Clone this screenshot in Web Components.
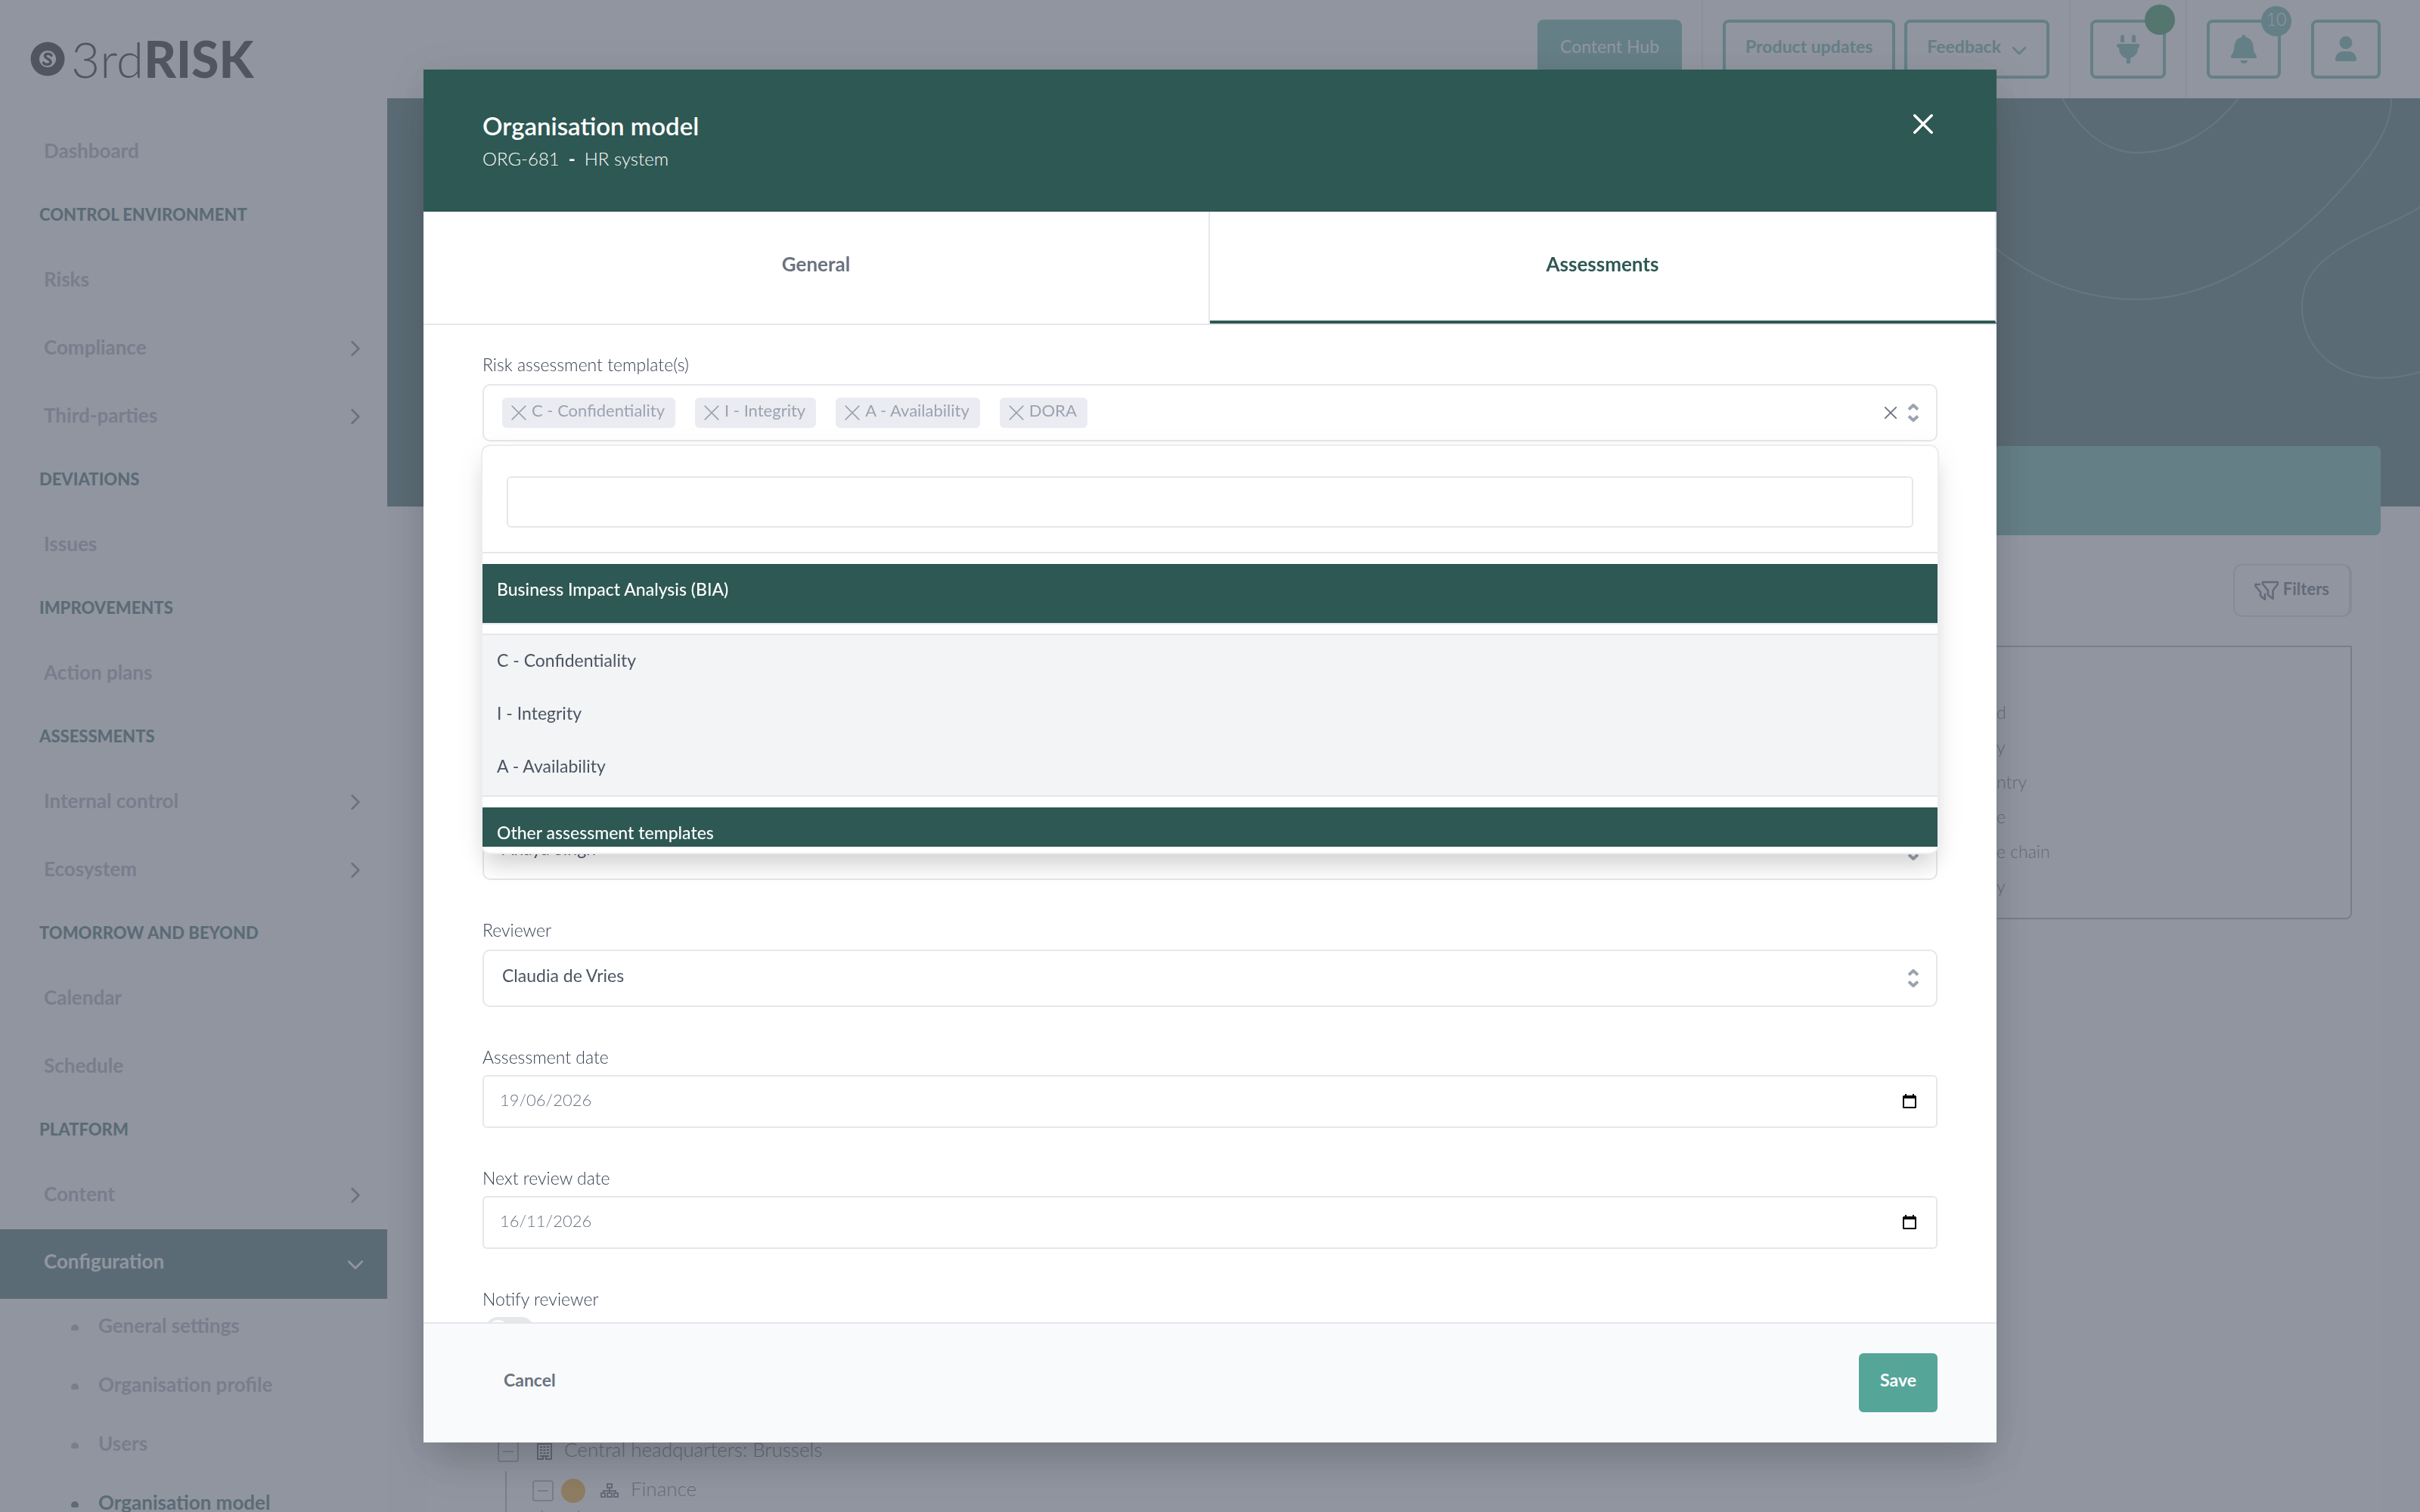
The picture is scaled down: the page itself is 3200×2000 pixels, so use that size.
<!DOCTYPE html>
<html lang="en">
<head>
<meta charset="utf-8">
<meta name="viewport" content="width=device-width, initial-scale=1">
<title>Organisation model</title>
<style>
  :root {
    --primary: #2e5853;
    --accent: #55a698;
    --gray-50: #f9fafc;
    --gray-100: #f3f4f6;
    --gray-200: #e5e7eb;
    --gray-300: #d1d5db;
    --gray-400: #9ca3af;
    --gray-500: #6b7280;
    --gray-600: #4b5563;
    --gray-700: #374151;
    --text-s: 22px;
    --text-m: 23px;
    --text-l: 26px;
    --text-xl: 33px;
  }

  body {
    margin: 0;
    height: 100vh;
    overflow: hidden;
    font-family: Lato, "Liberation Sans", sans-serif;
    font-size: var(--text-m);
    color: var(--gray-500);
    background: var(--gray-50);
  }
</style>
</head>
<body>
<app-shell>
  <app-sidebar slot="sidebar">
    <app-logo></app-logo>
    <nav-item>Dashboard</nav-item>
    <nav-heading>CONTROL ENVIRONMENT</nav-heading>
    <nav-item>Risks</nav-item>
    <nav-item expandable>Compliance</nav-item>
    <nav-item expandable>Third-parties</nav-item>
    <nav-heading>DEVIATIONS</nav-heading>
    <nav-item>Issues</nav-item>
    <nav-heading>IMPROVEMENTS</nav-heading>
    <nav-item>Action plans</nav-item>
    <nav-heading>ASSESSMENTS</nav-heading>
    <nav-item expandable>Internal control</nav-item>
    <nav-item expandable>Ecosystem</nav-item>
    <nav-heading>TOMORROW AND BEYOND</nav-heading>
    <nav-item>Calendar</nav-item>
    <nav-item>Schedule</nav-item>
    <nav-heading>PLATFORM</nav-heading>
    <nav-item expandable>Content</nav-item>
    <nav-item expandable open>Configuration</nav-item>
    <nav-subitem>General settings</nav-subitem>
    <nav-subitem>Organisation profile</nav-subitem>
    <nav-subitem>Users</nav-subitem>
    <nav-subitem current>Organisation model</nav-subitem>
  </app-sidebar>
  <app-header slot="header"></app-header>
  <page-hero slot="hero"></page-hero>
  <page-card>
    <type-legend></type-legend>
    <org-tree></org-tree>
  </page-card>
</app-shell>

<modal-dialog>
  <span slot="title">Organisation model</span>
  <span slot="code">ORG-681</span>
  <span slot="name">HR system</span>
  <modal-tabs slot="tabs"></modal-tabs>
  <multi-select label="Risk assessment template(s)" values="C - Confidentiality|I - Integrity|A - Availability|DORA"></multi-select>
  <select-field class="assessor" name="Assessor" value="Anaya Singh"></select-field>
  <select-field label="Reviewer" value="Claudia de Vries"></select-field>
  <date-field label="Assessment date" value="19/06/2026"></date-field>
  <date-field label="Next review date" value="16/11/2026"></date-field>
  <switch-field label="Notify reviewer"></switch-field>
</modal-dialog>

<script>
  const CARETS = `<svg class="carets" width="14" height="24" viewBox="0 0 14 24" fill="none" stroke="currentColor" stroke-width="4" stroke-linejoin="round" aria-hidden="true"><path d="M1 7.500L7 2l6 5.500M1 16.500L7 22l6-5.500"/></svg>`;
  const CROSS = (size, width) =>
    `<svg width="${size}" height="${size}" viewBox="0 0 20 20" fill="none" stroke="currentColor" stroke-width="${width}" stroke-linecap="round" aria-hidden="true"><path d="M2 2l16 16M18 2L2 18"/></svg>`;

  class BaseElement extends HTMLElement {
    constructor() {
      super();
      this.attachShadow({ mode: 'open' });
    }

    connectedCallback() {
      const template = document.createElement('template');
      template.innerHTML = `
        <style>
          :host { display: block; box-sizing: border-box; }
          *, *::before, *::after { box-sizing: border-box; }
          button, input, select { font: inherit; color: inherit; margin: 0; }
          button { cursor: pointer; background: none; border: 0; padding: 0; }
          a { color: inherit; text-decoration: none; }
          svg { display: block; flex: none; }
        </style>
        ${this.template()}`;
      this.shadowRoot.append(template.content.cloneNode(true));
    }
  }

  class AppShell extends BaseElement {
    template() {
      return `
        <style>
          :host { display: flex; height: 100vh; overflow: hidden; }
          .sidebar { flex: none; width: 16%; background: #fff; }
          .main { flex: 1; min-width: 0; }
          .content { margin-top: -80px; padding: 0 52px; position: relative; }
        </style>
        <div class="sidebar"><slot name="sidebar"></slot></div>
        <div class="main">
          <slot name="header"></slot>
          <slot name="hero"></slot>
          <div class="content"><slot></slot></div>
        </div>`;
    }
  }

  class AppSidebar extends BaseElement {
    template() {
      return `<nav aria-label="Main"><slot></slot></nav>`;
    }
  }

  class AppLogo extends BaseElement {
    template() {
      return `
        <style>
          :host { padding: 38px 40px; color: #000; }
          .logo { display: flex; align-items: center; height: 80px; }
          .name { margin-left: 8px; font-size: 66px; line-height: 80px; font-weight: 300; white-space: nowrap; }
          b { font-weight: 900; }
        </style>
        <div class="logo">
          <svg width="46" height="46" viewBox="0 0 46 46" aria-hidden="true">
            <circle cx="23" cy="23" r="22.500"/>
            <circle cx="23" cy="23" r="11" fill="#fff"/>
            <path d="M28 18.500c-1.500-3-8.500-3.500-8.500.500 0 4 7.500 3.500 7.500 8 0 4-7.500 4.500-9.500 1" fill="none" stroke="#000" stroke-width="3.500" stroke-linecap="round"/>
          </svg>
          <span class="name">3rd<b>RISK</b></span>
        </div>`;
    }
  }

  class NavHeading extends BaseElement {
    template() {
      return `
        <style>
          :host {
            height: 80px;
            padding: 0 52px;
            line-height: 76px;
            font-size: var(--text-s);
            font-weight: 900;
            color: var(--primary);
            white-space: nowrap;
          }
        </style>
        <slot></slot>`;
    }
  }

  /**
   * @attr expandable - shows a chevron
   * @attr open - highlights the row, chevron points down
   */
  class NavItem extends BaseElement {
    template() {
      const open = this.hasAttribute('open');
      const chevron = open ? 'M3 8l8 8 8-8' : 'M7 3l8 8-8 8';
      return `
        <style>
          a {
            display: flex;
            align-items: center;
            justify-content: space-between;
            height: 90px;
            padding: 0 30px 0 58px;
            font-size: var(--text-l);
            font-weight: 700;
            color: var(--gray-400);
          }
          span { padding-bottom: 4px; }
          svg { color: var(--gray-500); }
          :host([open]) a { height: 92px; background: var(--primary); color: #fff; }
          :host([open]) span { padding-bottom: 8px; }
          :host([open]) svg { color: #fff; }
        </style>
        <a href="#">
          <span><slot></slot></span>
          ${this.hasAttribute('expandable') ? `<svg width="24" height="24" viewBox="0 0 22 22" fill="none" stroke="currentColor" stroke-width="2.500" stroke-linecap="round" stroke-linejoin="round" aria-hidden="true"><path d="${chevron}"/></svg>` : ''}
        </a>`;
    }
  }

  class NavSubitem extends BaseElement {
    template() {
      return `
        <style>
          a {
            display: flex;
            align-items: center;
            gap: 26px;
            height: 78px;
            padding: 0 0 8px 94px;
            font-size: var(--text-l);
            font-weight: 700;
            color: var(--gray-400);
            white-space: nowrap;
          }
          a::before {
            content: '';
            width: 10px;
            height: 8px;
            margin-top: 6px;
            border-radius: 5px 5px 2px 2px;
            background: currentColor;
          }
          :host([current]) a { color: var(--primary); }
        </style>
        <a href="#"><slot></slot></a>`;
    }
  }

  class AppHeader extends BaseElement {
    template() {
      return `
        <style>
          header { display: flex; justify-content: flex-end; height: 130px; background: #fff; padding-right: 52px; }
          .group { display: flex; align-items: center; gap: 12px; padding: 0 26px; border-left: 2px solid var(--gray-200); }
          .group:first-child { border: 0; }
          .group:last-child { padding-right: 0; gap: 40px; }
          button {
            position: relative;
            display: flex;
            align-items: center;
            justify-content: center;
            gap: 14px;
            height: 78px;
            padding: 0 26px;
            border: 4px solid var(--accent);
            border-radius: 8px;
            color: var(--accent);
            font-weight: 700;
            white-space: nowrap;
          }
          button span { padding-bottom: 8px; }
          .solid { background: var(--accent); color: #fff; font-weight: 400; }
          .icon { width: 98px; padding: 0; }
          .plug { width: 100px; }
          .user { width: 92px; }
          .badge {
            position: absolute;
            top: -22px;
            right: -18px;
            width: 40px;
            height: 40px;
            padding: 0;
            border-radius: 50%;
            background: var(--accent);
            color: #fff;
            font-weight: 300;
            line-height: 34px;
          }
          .status { top: -24px; right: -16px; background: #15803d; }
        </style>
        <header>
          <div class="group"><button class="solid"><span>Content Hub</span></button></div>
          <div class="group">
            <button><span>Product updates</span></button>
            <button>
              <span>Feedback</span>
              <svg width="20" height="20" viewBox="0 0 20 20" fill="none" stroke="currentColor" stroke-width="2.500" stroke-linecap="round" stroke-linejoin="round" aria-hidden="true"><path d="M2 8l8 8 8-8"/></svg>
            </button>
          </div>
          <div class="group">
            <button class="icon plug" aria-label="Integrations">
              <svg width="30" height="40" viewBox="0 0 30 40" fill="currentColor" aria-hidden="true"><path d="M5 11V3.500a2.500 2.500 0 015 0V11zM20 11V3.500a2.500 2.500 0 015 0V11zM2 13h26a2 2 0 010 5v1c0 6-4 11-10 13v7h-5v-7C7 31 3 25 3 19v-1a2 2 0 01-1-5z"/></svg>
              <i class="badge status"></i>
            </button>
          </div>
          <div class="group">
            <button class="icon" aria-label="Notifications">
              <svg width="36" height="40" viewBox="0 0 36 40" fill="currentColor" aria-hidden="true"><path d="M18 1c1.500 0 2.500 1 2.500 3C27 5.500 30 10 30.500 16c.3 6 1 8 4 12 1.200 2 .5 4-1.500 4H3c-2 0-2.700-2-1.500-4 3-4 3.700-6 4-12C6 10 9 5.500 15.500 4c0-2 1-3 2.500-3zM13.500 35h9.500a4.700 4 0 01-9.500 0z"/></svg>
              <span class="badge">10</span>
            </button>
            <button class="icon user" aria-label="Account">
              <svg width="30" height="36" viewBox="0 0 30 36" fill="currentColor" aria-hidden="true"><circle cx="15" cy="9.500" r="8.500"/><path d="M3 34a2 2 0 01-2-2c0-6 4-11 10-11h8c6 0 10 5 10 11a2 2 0 01-2 2z"/></svg>
            </button>
          </div>
        </header>`;
    }
  }

  class PageHero extends BaseElement {
    template() {
      return `
        <style>
          .hero { display: flex; justify-content: flex-end; height: 540px; background: var(--primary); }
        </style>
        <div class="hero">
          <svg width="560" height="540" viewBox="2640 130 560 540" fill="none" stroke="#fff" stroke-opacity=".25" stroke-width="2" aria-hidden="true">
            <path d="M2727 130C2750 172 2784 202 2826 202C2876 202 2924 176 2960 130"/>
            <path d="M2640 329C2696 374 2760 396 2826 396C2926 396 3010 336 3072 276C3120 226 3164 178 3162 130"/>
            <path d="M3200 274C3164 296 3130 306 3102 324C3064 346 3044 370 3044 404C3044 462 3090 500 3148 500C3168 500 3184 497 3200 492"/>
          </svg>
        </div>`;
    }
  }

  class PageCard extends BaseElement {
    template() {
      return `
        <style>
          :host { background: #fff; border-radius: 8px; min-height: 1500px; }
          .banner { height: 118px; border-radius: 8px; background: var(--accent); }
          .body { padding: 38px; }
          .tools { display: flex; justify-content: flex-end; margin-bottom: 38px; }
          button {
            display: flex;
            align-items: center;
            gap: 6px;
            height: 70px;
            padding: 0 26px;
            border: 2px solid var(--gray-300);
            border-right-width: 4px;
            border-radius: 12px;
            font-size: var(--text-s);
            font-weight: 700;
            color: var(--gray-600);
          }
          button span { padding-bottom: 6px; }
        </style>
        <div class="banner"></div>
        <div class="body">
          <div class="tools">
            <button>
              <svg width="32" height="26" viewBox="0 0 32 26" fill="none" stroke="currentColor" stroke-width="2.500" stroke-linejoin="round" stroke-linecap="round" aria-hidden="true"><path d="M11 2h20v2.500L24.500 13v11L18 19v-6L11 4.500zM7 5H1.500v2.500L8 15v5l6 5v-7"/></svg>
              <span>Filters</span>
            </button>
          </div>
          <slot></slot>
        </div>`;
    }
  }

  class TypeLegend extends BaseElement {
    template() {
      return `
        <style>
          :host { border: 2px solid var(--gray-400); border-radius: 0 0 8px 8px; padding: 63px 0 19px; }
          ul { list-style: none; width: 468px; margin: 0 0 0 auto; padding: 0; font-weight: 300; line-height: 46px; color: var(--gray-600); }
        </style>
        <ul><li>d</li><li>y</li><li>ntry</li><li>e</li><li>e chain</li><li>y</li></ul>`;
    }
  }

  class OrgTree extends BaseElement {
    template() {
      return `
        <style>
          :host { margin-top: 678px; padding-left: 56px; font-size: var(--text-l); font-weight: 300; color: var(--gray-600); }
          .row { display: flex; align-items: center; height: 52px; }
          .row span { padding-bottom: 6px; }
          button { width: 28px; height: 28px; border: 2px solid var(--gray-400); border-radius: 4px; display: grid; place-items: center; }
          button::before { content: ''; width: 14px; height: 2px; background: var(--gray-400); }
          .building { margin: 0 16px 0 24px; }
          .children { margin-left: 10px; padding-left: 34px; border-left: 2px solid var(--gray-400); height: 80px; }
          .dot { width: 32px; height: 32px; margin: 0 20px 0 10px; border-radius: 50%; background: #f59e0b; }
          .unit { margin-right: 16px; }
          .stems { display: flex; gap: 46px; padding-left: 12px; }
          .stems i { width: 2px; height: 20px; background: var(--gray-400); }
        </style>
        <div class="row">
          <button aria-label="Collapse"></button>
          <svg class="building" width="20" height="24" viewBox="0 0 20 24" fill="none" stroke="currentColor" stroke-width="2" aria-hidden="true"><path d="M1 2h18v20h-7v-4H8v4H1z"/><path d="M4 6h12M4 10h12M4 14h12M4 18h3M13 18h3" stroke-dasharray="3 1.500"/></svg>
          <span>Central headquarters: Brussels</span>
        </div>
        <div class="children">
          <div class="row">
            <button aria-label="Collapse"></button>
            <i class="dot"></i>
            <svg class="unit" width="24" height="20" viewBox="0 0 24 20" fill="none" stroke="currentColor" stroke-width="2" aria-hidden="true"><path d="M9 1h6v5H9zM1 13h5v5H1zM9 13h6v5H9zM18 13h5v5h-5zM12 6v7M4 13v-3h16v3"/></svg>
            <span>Finance</span>
          </div>
          <div class="stems"><i></i><i></i></div>
        </div>`;
    }
  }

  class ModalDialog extends BaseElement {
    template() {
      return `
        <style>
          :host {
            position: fixed;
            inset: 0;
            display: flex;
            justify-content: center;
            padding: 92px 0;
            background: rgba(107, 114, 128, .75);
          }
          .dialog {
            display: flex;
            flex-direction: column;
            width: 65%;
            background: #fff;
            box-shadow: 0 40px 50px -10px rgba(0, 0, 0, .12), 0 8px 50px rgba(0, 0, 0, .1);
          }
          header {
            display: flex;
            justify-content: space-between;
            align-items: flex-start;
            height: 188px;
            padding: 54px 78px 0;
            background: var(--primary);
            color: #fff;
          }
          h2 { margin: 0; font-size: var(--text-xl); line-height: 40px; font-weight: 600; }
          p { display: flex; gap: 12px; margin: 6px 0 0; font-size: 24px; line-height: 36px; font-weight: 300; }
          p b { font-weight: 700; }
          .close { width: 38px; height: 36px; display: grid; place-items: center; }
          .body { flex: 1; min-height: 0; overflow: hidden; display: flex; flex-direction: column; gap: 54px; padding: 40px 78px; }
          .body ::slotted(*) { flex: none; }
          .body ::slotted(.assessor) { margin-top: 450px; }
          footer {
            display: flex;
            justify-content: space-between;
            align-items: center;
            height: 159px;
            padding: 0 78px 2px;
            border-top: 2px solid var(--gray-200);
            background: var(--gray-50);
            font-weight: 700;
          }
          footer button { height: 78px; padding: 0 28px 8px; border-radius: 6px; }
          .save { background: var(--accent); color: #fff; }
        </style>
        <div class="dialog" role="dialog" aria-modal="true">
          <header>
            <div>
              <h2><slot name="title"></slot></h2>
              <p><slot name="code"></slot><b>-</b><slot name="name"></slot></p>
            </div>
            <button class="close" aria-label="Close">${CROSS(28, 2.5)}</button>
          </header>
          <slot name="tabs"></slot>
          <div class="body"><slot></slot></div>
          <footer>
            <button>Cancel</button>
            <button class="save">Save</button>
          </footer>
        </div>`;
    }
  }

  class ModalTabs extends BaseElement {
    template() {
      return `
        <style>
          :host { border-bottom: 2px solid var(--gray-200); }
          div { display: flex; }
          button {
            flex: 1;
            height: 148px;
            padding-bottom: 10px;
            border-right: 2px solid var(--gray-200);
            font-size: var(--text-l);
            font-weight: 700;
          }
          [aria-selected="true"] { padding-bottom: 6px; border-bottom: 4px solid var(--primary); color: var(--primary); }
        </style>
        <div role="tablist">
          <button role="tab" aria-selected="false">General</button>
          <button role="tab" aria-selected="true">Assessments</button>
        </div>`;
    }
  }

  const LABEL_STYLE = `
    label, .label { display: block; line-height: 24px; font-weight: 300; color: var(--gray-700); }`;

  /**
   * @attr label - text above the box
   * @attr values - chosen templates, separated by |
   */
  class MultiSelect extends BaseElement {
    template() {
      const chips = this.getAttribute('values').split('|').map((value) => `
        <button class="chip" aria-label="Remove ${value}">${CROSS(22, 1.5)}<span>${value}</span></button>`).join('');
      return `
        <style>
          ${LABEL_STYLE}
          :host { position: relative; z-index: 1; }
          .box {
            display: flex;
            align-items: center;
            gap: 26px;
            height: 76px;
            margin-top: 14px;
            padding: 0 23px 0 24px;
            border: 2px solid var(--gray-200);
            border-radius: 10px;
          }
          .chip {
            display: flex;
            align-items: center;
            gap: 6px;
            height: 40px;
            padding: 0 14px 0 11px;
            border-radius: 6px;
            background: #ebecf2;
            color: var(--gray-400);
            font-size: var(--text-s);
            white-space: nowrap;
          }
          .chip span { padding-bottom: 8px; }
          .tools { display: flex; align-items: center; gap: 14px; margin-left: auto; color: var(--gray-500); }
          .carets { color: var(--gray-400); }
        </style>
        <div class="label" id="label">${this.getAttribute('label')}</div>
        <div class="box" role="group" aria-labelledby="label">
          ${chips}
          <div class="tools">
            <button aria-label="Clear all">${CROSS(18, 2)}</button>
            ${CARETS}
          </div>
        </div>
        <option-menu></option-menu>`;
    }
  }

  class OptionMenu extends BaseElement {
    template() {
      return `
        <style>
          :host {
            position: absolute;
            top: 118px;
            left: -2px;
            right: -2px;
            padding-bottom: 8px;
            border: 2px solid #ededf0;
            border-radius: 12px;
            background: #fff;
            box-shadow: 0 20px 30px -6px rgba(0, 0, 0, .14), 0 8px 40px rgba(0, 0, 0, .06);
          }
          .search { padding: 40px 32px 32px; border-bottom: 2px solid var(--gray-200); }
          input { display: block; width: 100%; height: 68px; padding: 0 24px; border: 2px solid var(--gray-200); border-radius: 6px; background: #fff; outline: 0; }
          .list { height: 388px; overflow: hidden; }
          .group {
            height: 80px;
            margin: 14px 0 12px;
            padding-left: 19px;
            border-bottom: 2px solid var(--gray-200);
            background: var(--primary);
            background-clip: padding-box;
            color: #fff;
            font-weight: 500;
            line-height: 66px;
          }
          ul { list-style: none; margin: 0; padding: 0 0 2px; border: solid var(--gray-200); border-width: 2px 0; background: var(--gray-100); }
          li { padding-left: 19px; line-height: 66px; height: 70px; color: var(--gray-600); }
        </style>
        <div class="search"><input type="search" aria-label="Search templates"></div>
        <div class="list">
          <div class="group">Business Impact Analysis (BIA)</div>
          <ul role="listbox" aria-label="Business Impact Analysis (BIA)">
            <li role="option" aria-selected="true">C - Confidentiality</li>
            <li role="option" aria-selected="true">I - Integrity</li>
            <li role="option" aria-selected="true">A - Availability</li>
          </ul>
          <div class="group">Other assessment templates</div>
        </div>`;
    }
  }

  class SelectField extends BaseElement {
    template() {
      const label = this.getAttribute('label');
      const value = this.getAttribute('value');
      return `
        <style>
          ${LABEL_STYLE}
          label { margin-bottom: 14px; }
          .box { display: grid; align-items: center; }
          .box > * { grid-area: 1 / 1; }
          select {
            appearance: none;
            width: 100%;
            height: 76px;
            padding: 0 60px 8px 24px;
            border: 2px solid var(--gray-200);
            border-radius: 10px;
            background: #fff;
            color: var(--gray-600);
          }
          .carets { justify-self: end; margin-right: 25px; color: var(--gray-400); pointer-events: none; }
        </style>
        ${label ? `<label for="control">${label}</label>` : ''}
        <div class="box">
          <select id="control" aria-label="${label || this.getAttribute('name')}"><option>${value}</option></select>
          ${CARETS}
        </div>`;
    }
  }

  class DateField extends BaseElement {
    template() {
      return `
        <style>
          ${LABEL_STYLE}
          .box {
            display: flex;
            align-items: center;
            height: 70px;
            margin-top: 12px;
            padding: 0 25px 0 21px;
            border: 2px solid var(--gray-200);
            border-radius: 6px;
          }
          input { flex: 1; padding: 0 0 6px; border: 0; background: none; outline: 0; font-size: var(--text-s); font-weight: 300; }
          button { color: #000; }
        </style>
        <label for="control">${this.getAttribute('label')}</label>
        <div class="box">
          <input id="control" type="text" inputmode="numeric" value="${this.getAttribute('value')}">
          <button aria-label="Open calendar">
            <svg width="20" height="20" viewBox="0 0 20 20" aria-hidden="true"><path d="M4 0h2v2h8V0h2v2h1.500A1.500 1.500 0 0119 3.500v14a1.500 1.500 0 01-1.500 1.500h-15A1.500 1.500 0 011 17.500v-14A1.500 1.500 0 012.500 2H4zM3 6v11h14V6z" fill-rule="evenodd"/></svg>
          </button>
        </div>`;
    }
  }

  class SwitchField extends BaseElement {
    template() {
      return `
        <style>
          ${LABEL_STYLE}
          input {
            appearance: none;
            display: block;
            width: 66px;
            height: 36px;
            margin: 12px 0 0 3px;
            padding: 4px;
            border-radius: 18px;
            background: var(--gray-200);
          }
          input::before { content: ''; display: block; width: 28px; height: 28px; border-radius: 50%; background: #fff; }
        </style>
        <label for="control">${this.getAttribute('label')}</label>
        <input id="control" type="checkbox" role="switch">`;
    }
  }

  customElements.define('app-shell', AppShell);
  customElements.define('app-sidebar', AppSidebar);
  customElements.define('app-logo', AppLogo);
  customElements.define('nav-heading', NavHeading);
  customElements.define('nav-item', NavItem);
  customElements.define('nav-subitem', NavSubitem);
  customElements.define('app-header', AppHeader);
  customElements.define('page-hero', PageHero);
  customElements.define('page-card', PageCard);
  customElements.define('type-legend', TypeLegend);
  customElements.define('org-tree', OrgTree);
  customElements.define('option-menu', OptionMenu);
  customElements.define('multi-select', MultiSelect);
  customElements.define('select-field', SelectField);
  customElements.define('date-field', DateField);
  customElements.define('switch-field', SwitchField);
  customElements.define('modal-tabs', ModalTabs);
  customElements.define('modal-dialog', ModalDialog);
</script>
</body>
</html>
